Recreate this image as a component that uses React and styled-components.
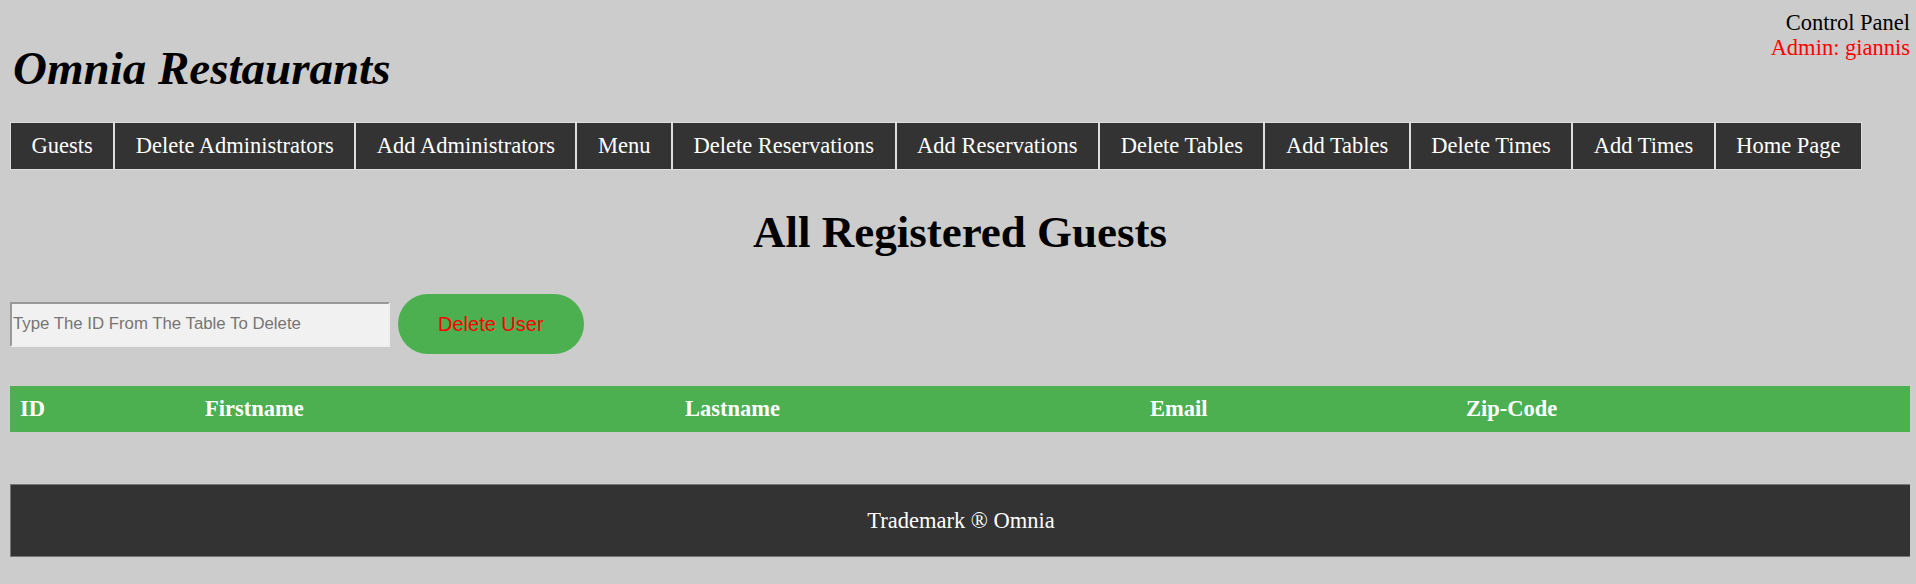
import styled, { createGlobalStyle } from 'styled-components';

const GlobalStyle = createGlobalStyle`
  html, body {
    background: #cccccc;
  }
  body {
    margin: 10px 6px 10px 10px;
    font-family: "Liberation Serif", "Times New Roman", serif;
  }
`;

const Header = styled.header`
  display: flex;
  justify-content: space-between;
  align-items: flex-start;
`;

const Title = styled.h1`
  margin: 31px 0 0 3px;
  font-size: 47px;
  font-weight: bold;
  font-style: italic;
  line-height: normal;
  color: #000;
`;

const AdminBox = styled.div`
  text-align: right;
  font-size: 22.5px;
  line-height: 25px;
`;

const AdminLine = styled.div`
  color: ${(p) => (p.$accent ? '#ff0000' : '#000')};
`;

const Nav = styled.nav`
  display: flex;
  margin-top: 27px;
`;

const NavItem = styled.a`
  display: flex;
  align-items: center;
  height: 46px;
  padding: 0 20.5px;
  background: #333333;
  border: 1px solid #dddddd;
  color: #fff;
  font-size: 22.5px;
  text-decoration: none;
  white-space: nowrap;
`;

const PageTitle = styled.h2`
  margin: 36px 0 0;
  text-align: center;
  font-size: 45px;
  font-weight: bold;
  line-height: normal;
`;

const Controls = styled.div`
  display: flex;
  align-items: center;
  gap: 8px;
  margin-top: 36px;
`;

const IdInput = styled.input`
  box-sizing: border-box;
  width: 380px;
  height: 45px;
  padding: 0 1px;
  background: #f1f1f1;
  border-style: solid;
  border-width: 2.5px;
  border-color: #999999 #eeeeee #eeeeee #999999;
  font-family: "Liberation Sans", Arial, sans-serif;
  font-size: 16.8px;
  outline: none;

  &::placeholder {
    color: #757575;
  }
`;

const DeleteButton = styled.button`
  height: 60px;
  padding: 0 40px;
  border: none;
  border-radius: 30px;
  background: #4caf50;
  color: #ff0000;
  font-family: "Liberation Sans", Arial, sans-serif;
  font-size: 20px;
  cursor: pointer;
`;

const Table = styled.table`
  width: 100%;
  margin-top: 32px;
  border-collapse: collapse;
  table-layout: fixed;
`;

const HeadCell = styled.th`
  width: ${(p) => p.$w || 'auto'};
  height: 46px;
  padding: 0 10px;
  background: #4caf50;
  color: #fff;
  font-size: 22.5px;
  font-weight: bold;
  text-align: left;
  vertical-align: middle;
  box-sizing: border-box;
`;

const Footer = styled.footer`
  display: flex;
  align-items: center;
  justify-content: center;
  width: 100%;
  height: 71px;
  margin-top: 52px;
  background: #333333;
  border: 1px solid #777777;
  color: #fff;
  font-size: 22.5px;
`;

const links = [
  'Guests',
  'Delete Administrators',
  'Add Administrators',
  'Menu',
  'Delete Reservations',
  'Add Reservations',
  'Delete Tables',
  'Add Tables',
  'Delete Times',
  'Add Times',
  'Home Page',
];

const columns = [
  { label: 'ID', w: '185px' },
  { label: 'Firstname', w: '480px' },
  { label: 'Lastname', w: '465px' },
  { label: 'Email', w: '316px' },
  { label: 'Zip-Code' },
];

const App = () => {
  return (
    <>
      <GlobalStyle />
      <Header>
        <Title>Omnia Restaurants</Title>
        <AdminBox>
          <AdminLine>Control Panel</AdminLine>
          <AdminLine $accent>Admin: giannis</AdminLine>
        </AdminBox>
      </Header>

      <Nav>
        {links.map((link) => (
          <NavItem key={link} href="#">
            {link}
          </NavItem>
        ))}
      </Nav>

      <PageTitle>All Registered Guests</PageTitle>

      <Controls>
        <IdInput type="text" placeholder="Type The ID From The Table To Delete" />
        <DeleteButton type="button">Delete User</DeleteButton>
      </Controls>

      <Table>
        <thead>
          <tr>
            {columns.map((col) => (
              <HeadCell key={col.label} $w={col.w}>
                {col.label}
              </HeadCell>
            ))}
          </tr>
        </thead>
        <tbody />
      </Table>

      <Footer>Trademark ® Omnia</Footer>
    </>
  );
};

export default App;
